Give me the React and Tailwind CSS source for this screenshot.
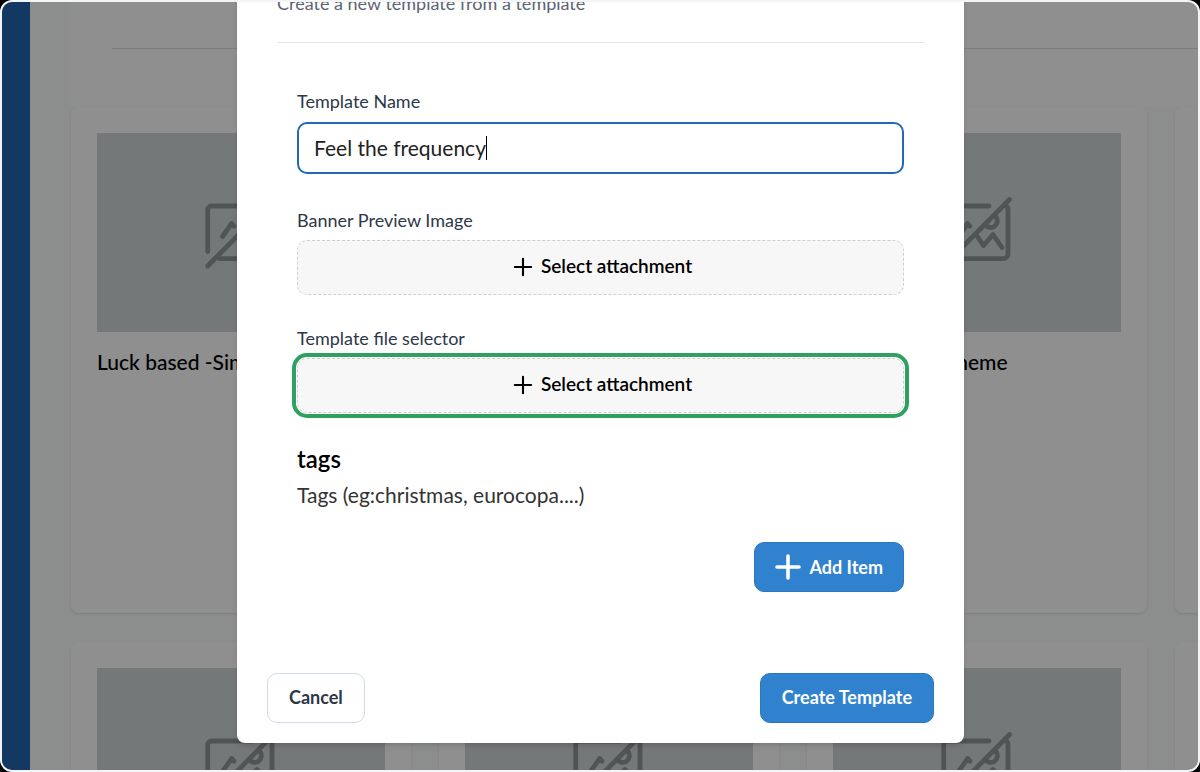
import React, { useState } from "react";
import { Plus } from "lucide-react";

const templateRows = [
  [
    { id: 1, title: "Luck based -Simple" },
    { id: 2, title: "Quiz template" },
    { id: 3, title: "Luck based -theme" },
    { id: 4, title: "" },
  ],
  [
    { id: 5, title: "" },
    { id: 6, title: "" },
    { id: 7, title: "" },
    { id: 8, title: "" },
  ],
];

// Crossed-out picture shown when a template has no banner
function NoImageIcon() {
  return (
    <svg
      viewBox="0 0 72 72"
      className="w-[72px] h-[72px] text-[#8f9696]"
      fill="none"
      stroke="currentColor"
      strokeWidth="4.8"
      strokeLinecap="round"
      strokeLinejoin="round"
      aria-hidden="true"
    >
      <path d="M2.7 54.5V13a4 4 0 0 1 4-4H48" />
      <path d="M2.7 69 68.5 2.5" />
      <path d="M14.5 61.7H62a5 5 0 0 0 5-5V12.5a4 4 0 0 0-3-4" />
      <path d="M17.5 39.5 26.7 26.5l2.3 2.7" />
      <path d="M55 19.8a6.4 6.4 0 1 1-10.5 8" />
      <path d="M35.7 38.5 42.5 48.5 52 37.5 61 50.5" />
    </svg>
  );
}

function TemplateCard({ title }) {
  return (
    <div className="w-[340px] h-[506px] shrink-0 bg-white rounded-lg shadow-sm p-[26px]">
      <div className="h-[199px] bg-[#d0d6d7] flex items-center justify-center">
        <NoImageIcon />
      </div>
      <h3 className="mt-4 text-[21px] leading-7 font-medium text-black whitespace-nowrap">
        {title}
      </h3>
    </div>
  );
}

function AttachmentField({ id, label, highlighted }) {
  return (
    <div>
      <label htmlFor={id} className="block text-[18px] leading-6 text-[#2d3748]">
        {label}
      </label>
      <button
        type="button"
        id={id}
        className={`mt-2 w-full h-[55px] pb-0.5 flex items-center justify-center gap-1 rounded-[10px] border border-dashed border-[#cfcfd2] bg-[#f7f7f7] text-[19px] font-semibold text-black ${
          highlighted ? "outline-4 outline-offset-1 outline-[#2fa05f]" : ""
        }`}
      >
        <Plus size={28} strokeWidth={1.8} />
        Select attachment
      </button>
    </div>
  );
}

function CreateTemplateModal() {
  const [name, setName] = useState("Feel the frequency");

  return (
    <form
      role="dialog"
      onSubmit={(e) => e.preventDefault()}
      className="w-full max-w-[727px] bg-white rounded-lg shadow-md"
    >
      <div className="mx-10 pb-[27px] border-b border-[#e2e3e6]">
        <p className="text-[18px] leading-6 text-[#5b6472]">
          Create a new template from a template
        </p>
      </div>

      <div className="px-[60px] pt-[46px]">
        <label
          htmlFor="template-name"
          className="block text-[18px] leading-6 text-[#2d3748]"
        >
          Template Name
        </label>
        <div className="relative mt-[9px]">
          <input
            id="template-name"
            type="text"
            value={name}
            onChange={(e) => setName(e.target.value)}
            className="block w-full h-[52px] px-[15px] pb-0.5 rounded-[10px] border-2 border-[#2069b4] bg-white text-[21px] text-[#222] outline-none"
          />
          {/* Text caret */}
          <span className="absolute left-[189px] top-[14px] w-px h-6 bg-black" />
        </div>

        <div className="mt-[34px] space-y-[31px]">
          <AttachmentField id="banner-image" label="Banner Preview Image" />
          <AttachmentField
            id="template-file"
            label="Template file selector"
            highlighted
          />
        </div>

        <h4 className="mt-8 text-[24px] leading-7 font-semibold text-black">
          tags
        </h4>
        <p className="mt-2 text-[21px] leading-7 text-[#333]">
          Tags (eg:christmas, eurocopa....)
        </p>

        <div className="mt-[33px] flex justify-end">
          <button
            type="button"
            className="h-[50px] px-5 flex items-center gap-2 rounded-[10px] border border-[#2a76c0] bg-[#3182ce] text-[18px] font-bold text-white"
          >
            <svg
              viewBox="0 0 26 26"
              className="w-[26px] h-[26px]"
              stroke="currentColor"
              strokeWidth="3.6"
              strokeLinecap="round"
              aria-hidden="true"
            >
              <path d="M13 2v22M2 13h22" />
            </svg>
            Add Item
          </button>
        </div>
      </div>

      {/* Footer */}
      <div className="mt-[81px] px-[30px] pb-5 flex justify-between">
        <button
          type="button"
          className="h-[50px] px-[21px] pb-0.5 rounded-[10px] border border-[#d3dce8] bg-white text-[18px] font-bold text-[#2d3748]"
        >
          Cancel
        </button>
        <button
          type="submit"
          className="h-[50px] px-[21px] pb-0.5 rounded-[10px] border border-[#2a76c0] bg-[#3182ce] text-[18px] font-bold text-white"
        >
          Create Template
        </button>
      </div>
    </form>
  );
}

export default function App() {
  return (
    <div className="h-screen bg-black font-[Lato,sans-serif]">
      <div className="relative h-full flex overflow-hidden rounded-xl border-2 border-[#f4f5f7] bg-[#f4f5f7]">
        <aside className="w-7 shrink-0 bg-[#2367b0]" />

        <main className="flex-1 min-w-0 overflow-hidden bg-[#fafdfb] pl-[41px]">
          <header className="h-[105px] bg-white pl-[41px]">
            <div className="h-[47px] border-b border-[#dfdfdf]" />
          </header>
          <div className="space-y-[29px]">
            {templateRows.map((row, i) => (
              <div key={i} className="flex gap-7">
                {row.map((template) => (
                  <TemplateCard key={template.id} title={template.title} />
                ))}
              </div>
            ))}
          </div>
        </main>

        {/* Modal overlay */}
        <div className="absolute inset-0 flex items-end justify-center bg-black/44 pb-[27px] pl-px">
          <CreateTemplateModal />
        </div>
      </div>
    </div>
  );
}
